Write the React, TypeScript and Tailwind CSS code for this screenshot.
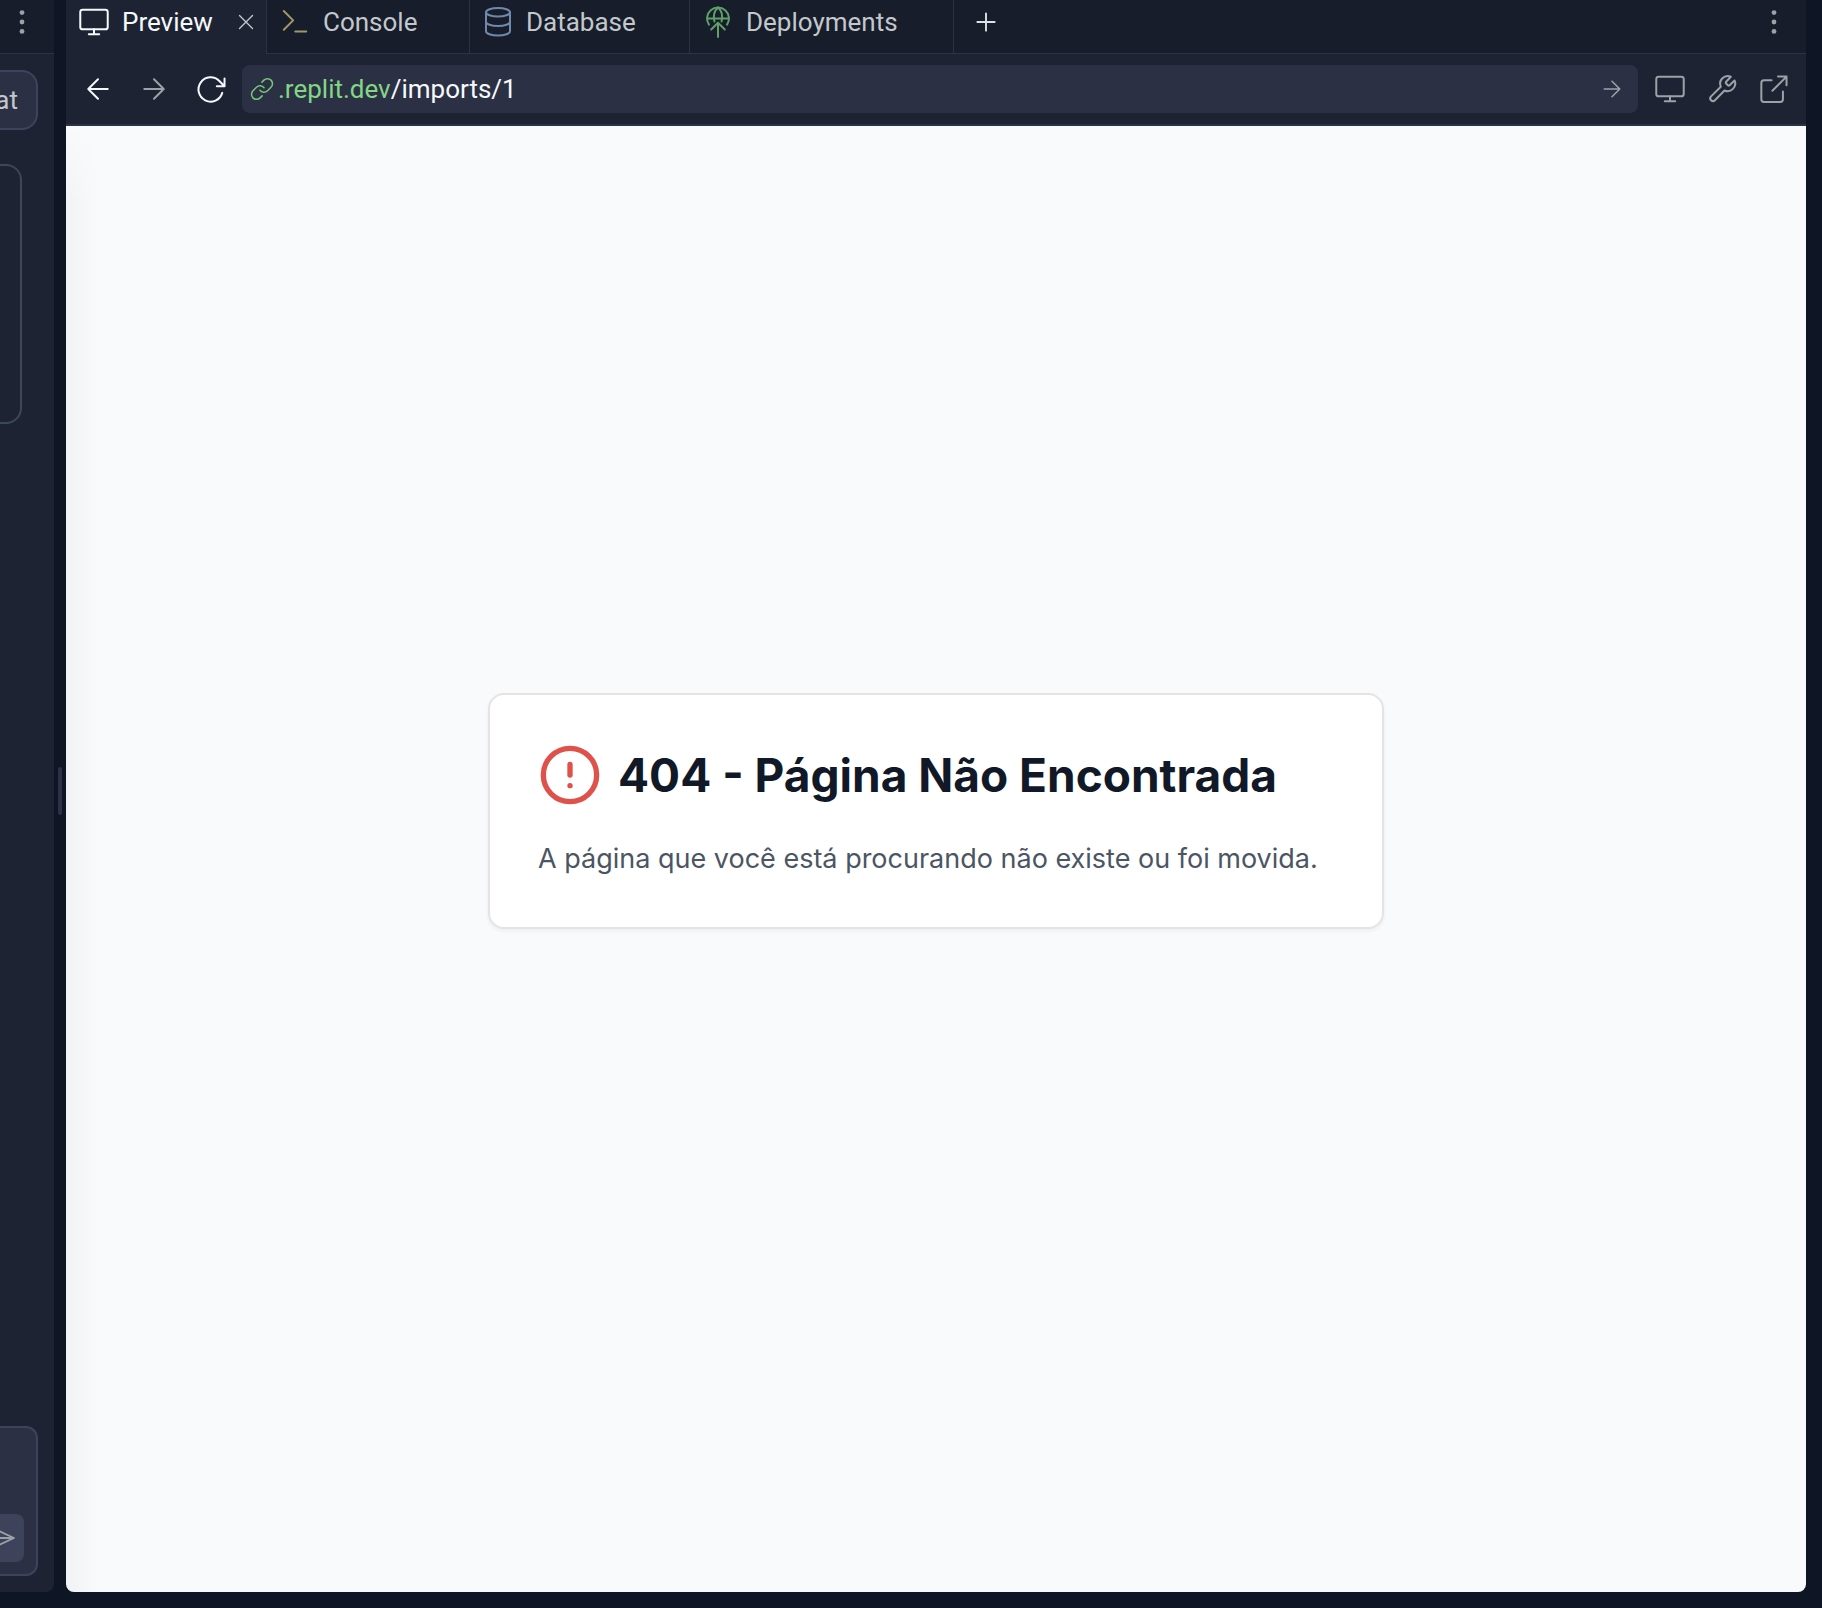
import type { ReactNode } from "react";

type IconProps = { className?: string };

function Stroke({ className, children, width = 1.25 }: IconProps & { children: ReactNode; width?: number }) {
  return (
    <svg
      viewBox="0 0 24 24"
      className={className}
      fill="none"
      stroke="currentColor"
      strokeWidth={width}
      strokeLinecap="round"
      strokeLinejoin="round"
      aria-hidden="true"
    >
      {children}
    </svg>
  );
}

function MonitorIcon({ className }: IconProps) {
  return (
    <Stroke className={className} width={1.5}>
      <rect x="1.7" y="2.9" width="20.6" height="14.6" rx="1.8" />
      <path d="M12 17.5v3.6M8.1 21.1h7.8" />
    </Stroke>
  );
}

function ConsoleIcon({ className }: IconProps) {
  return (
    <Stroke className={className} width={1.5}>
      <path d="M3.6 3.8l7 7-7 7M12.2 19.2h8.2" />
    </Stroke>
  );
}

function DatabaseIcon({ className }: IconProps) {
  return (
    <Stroke className={className} width={1.5}>
      <ellipse cx="12" cy="4.7" rx="9" ry="3.2" />
      <path d="M3 4.7v14.2c0 1.8 4 3.2 9 3.2s9-1.4 9-3.2V4.7M3 11.8c0 1.8 4 3.2 9 3.2s9-1.4 9-3.2" />
    </Stroke>
  );
}

function DeploymentsIcon({ className }: IconProps) {
  return (
    <Stroke className={className} width={1.5}>
      <path d="M5.2 14A8.2 8.2 0 1 1 18.8 14" />
      <path d="M3.8 9.4h16.4M9.3 11.6C8.400 8 8.900 4 12 1.200c3.100 2.800 3.600 6.800 2.700 10.400" />
      <path d="M12 23.200V12.800M6.900 17.600L12 12.600l5.100 5" />
    </Stroke>
  );
}

function DotsIcon({ className }: IconProps) {
  return (
    <svg viewBox="0 0 32 32" className={className} fill="currentColor" aria-hidden="true">
      <circle cx="16" cy="6.6" r="2.4" />
      <circle cx="16" cy="16" r="2.4" />
      <circle cx="16" cy="25.4" r="2.4" />
    </svg>
  );
}

type TabProps = {
  label: string;
  icon: ReactNode;
  size: string;
  active?: boolean;
};

function Tab({ label, icon, size, active }: TabProps) {
  return (
    <div
      className={`flex h-[54px] shrink-0 items-center border-r border-r-[#2b3245] pb-[10px] ${size} ${
        active ? "bg-[#1d2333] text-[#f5f9fc]" : "border-b border-b-[#2b3245] text-[#c2c8cc]"
      }`}
    >
      <button type="button" role="tab" aria-selected={!!active} className="flex items-center gap-3 pl-3">
        {icon}
        <span>{label}</span>
      </button>
      {active && (
        <button type="button" aria-label="Close Preview" className="mr-2 ml-auto text-[#c2c8cc]">
          <Stroke className="size-6" width={1.4}>
            <path d="M5.5 5.5l13 13M18.5 5.5l-13 13" />
          </Stroke>
        </button>
      )}
    </div>
  );
}

function ChatPane() {
  return (
    <aside className="flex w-[54px] shrink-0 flex-col overflow-hidden rounded-br-lg bg-[#1d2333] text-[#c2c8cc]">
      <div className="flex h-[54px] shrink-0 justify-center border-b border-[#2b3245] bg-[#171d2a] pt-1.5">
        <button type="button" aria-label="Chat options" className="-ml-2.5 h-8 text-[#9da2a6]">
          <DotsIcon className="size-8" />
        </button>
      </div>
      <button
        type="button"
        className="mt-4 mr-4 flex h-[60px] shrink-0 items-center justify-end rounded-r-2xl border-2 border-l-0 border-[#3c445c] bg-[#2b3044] pr-[18px]"
      >
        at
      </button>
      <div className="mt-[34px] mr-8 h-[260px] shrink-0 rounded-r-2xl border-2 border-l-0 border-[#3a4a54]" />
      <form
        className="mt-auto mr-4 mb-4 flex h-[150px] shrink-0 items-end justify-end rounded-r-xl border-2 border-l-0 border-[#3c445c] bg-[#2b3044] pr-3 pb-3"
        onSubmit={(e) => e.preventDefault()}
      >
        <button type="submit" aria-label="Send" className="flex h-12 w-6 items-center justify-end rounded-r-lg bg-[#3c435a] pr-2 text-[#9da2a6]">
          <svg viewBox="0 0 16 24" className="h-6 w-4" fill="none" stroke="currentColor" strokeWidth="1.8" strokeLinejoin="round" aria-hidden="true">
            <path d="M-2 4.5L14 12l-16 7.5M-2 12h16" />
          </svg>
        </button>
      </form>
    </aside>
  );
}

function Toolbar() {
  return (
    <div className="flex h-[72px] shrink-0 items-center border-b-2 border-[#2b3245] px-4 text-[#9da2a6]">
      <button type="button" aria-label="Back" className="text-[#f5f9fc]">
        <Stroke className="size-8" width={1.5}>
          <path d="M19.3 12H4.7M12 4.7L4.7 12l7.3 7.3" />
        </Stroke>
      </button>
      <button type="button" aria-label="Forward" className="ml-6">
        <Stroke className="size-8" width={1.5}>
          <path d="M4.7 12h14.6M12 4.7l7.3 7.3-7.3 7.3" />
        </Stroke>
      </button>
      <button type="button" aria-label="Reload" className="ml-6 text-[#f5f9fc]">
        <Stroke className="size-8" width={1.5}>
          <path d="M22.9 4.1v5.8h-5.8M22.9 9.9l-3.9-3.9a9.1 9.1 0 1 0 2.2 8.9" />
        </Stroke>
      </button>
      <form
        className="ml-4 flex h-12 min-w-0 flex-1 items-center rounded-lg bg-[#2b3044] pr-[9px] pl-2"
        onSubmit={(e) => e.preventDefault()}
      >
        <Stroke className="mr-1 size-6 shrink-0 text-[#77c97a]" width={1.5}>
          <path d="M10 13.2a5 5 0 0 0 7.5.5l3.500-3.500a5 5 0 0 0-7.100-7.100l-2 2" />
          <path d="M14 10.8a5 5 0 0 0-7.5-.5l-3.500 3.500a5 5 0 0 0 7.100 7.100l2-2" />
        </Stroke>
        <label htmlFor="path" className="text-[#82d685]">
          .replit.dev
        </label>
        <input id="path" type="text" defaultValue="/imports/1" className="min-w-0 flex-1 bg-transparent text-[#f5f9fc] outline-none" />
        <button type="submit" aria-label="Go">
          <Stroke className="size-[34px]" width={1.1}>
            <path d="M6.5 12h11M12 6.5l5.5 5.5-5.5 5.5" />
          </Stroke>
        </button>
      </form>
      <button type="button" aria-label="Device size" className="ml-4">
        <MonitorIcon className="size-8" />
      </button>
      <button type="button" aria-label="Developer tools" className="ml-5">
        <Stroke className="size-8" width={1.5}>
          <path d="M15.1 6.6a.9.9 0 0 0 0 1.3l1.3 1.3a.9.9 0 0 0 1.3 0l3.700-3.600a5.700 5.700 0 0 1-7.500 7.500l-7.200 7.300a2 2 0 0 1-2.900-2.900l7.300-7.200a5.700 5.700 0 0 1 7.500-7.500z" />
        </Stroke>
      </button>
      <button type="button" aria-label="Open in new tab" className="ml-5">
        <Stroke className="size-8" width={1.5}>
          <path d="M10.2 5.5H4.5a2 2 0 0 0-2 2v12.200a2 2 0 0 0 2 2h12.200a2 2 0 0 0 2-2v-5.800M15 2.700h6.400v6.400M21.400 2.700L10.800 13.300" />
        </Stroke>
      </button>
    </div>
  );
}

function NotFoundPage() {
  return (
    <main className="relative flex flex-1 items-center justify-center bg-[#f9fafc] pb-24 font-[Inter,sans-serif]">
      <div className="absolute inset-y-0 left-0 w-8 bg-linear-to-r from-black/3 to-transparent mask-t-from-[calc(100%-80px)]" />
      <section className="w-full max-w-4xl rounded-2xl border-2 border-[#e5e4e3] bg-white p-12 shadow-[0_2px_4px_rgba(0,0,0,0.05)]">
        <div className="flex items-center gap-4">
          <Stroke className="size-16 shrink-0 text-[#df524c]" width={2}>
            <circle cx="12" cy="12" r="10" />
            <path d="M12 8v4M12 16h.01" />
          </Stroke>
          <h1 className="text-[46px] leading-none font-bold whitespace-nowrap text-[#111827]">404 - Página Não Encontrada</h1>
        </div>
        <p className="mt-8 text-[27px] leading-10 whitespace-nowrap text-[#4b5563]">
          A página que você está procurando não existe ou foi movida.
        </p>
      </section>
    </main>
  );
}

export default function App() {
  return (
    <div className="flex h-screen overflow-hidden bg-[#0e1524] pr-4 pb-4 font-[Roboto,sans-serif] text-[26px] leading-8">
      <ChatPane />
      <div className="flex w-3 shrink-0 items-center justify-center pb-2.5">
        <div className="h-12 w-1 rounded-sm bg-[#2b3245]" />
      </div>
      <div className="flex min-w-0 flex-1 flex-col overflow-hidden rounded-b-lg bg-[#1d2333]">
        <div role="tablist" className="flex shrink-0 bg-[#171d2a]">
          <Tab label="Preview" active size="w-[201px]" icon={<MonitorIcon className="size-8" />} />
          <Tab label="Console" size="w-[203px]" icon={<ConsoleIcon className="size-8 text-[#a39767]" />} />
          <Tab label="Database" size="w-[220px]" icon={<DatabaseIcon className="size-8 text-[#7188ad]" />} />
          <Tab label="Deployments" size="w-[264px]" icon={<DeploymentsIcon className="size-8 text-[#5f9f68]" />} />
          <div className="flex h-[54px] flex-1 items-center justify-between border-b border-[#2b3245] px-4 pb-[10px]">
            <button type="button" aria-label="New tab" className="text-[#dfe3e6]">
              <Stroke className="size-8" width={1.4}>
                <path d="M12 5.5v13M5.5 12h13" />
              </Stroke>
            </button>
            <button type="button" aria-label="Pane options" className="text-[#9da2a6]">
              <DotsIcon className="size-8" />
            </button>
          </div>
        </div>
        <Toolbar />
        <NotFoundPage />
      </div>
    </div>
  );
}
